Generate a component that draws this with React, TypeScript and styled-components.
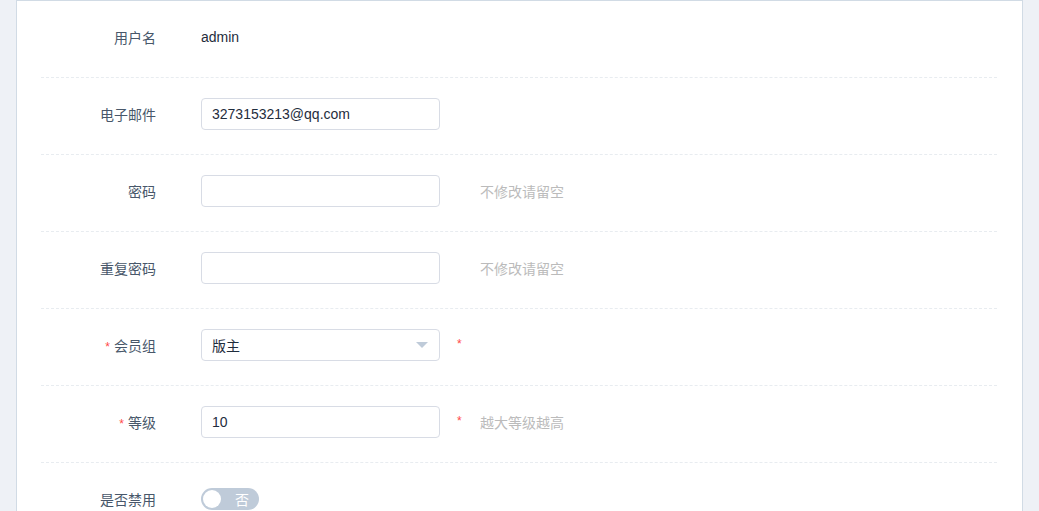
import styled, { createGlobalStyle } from "styled-components";

const GlobalStyle = createGlobalStyle`
  html, body {
    margin: 0;
    padding: 0;
    background: #eef1f6;
    font-family: "Liberation Sans", "Noto Sans CJK SC", Arial, sans-serif;
    font-size: 14px;
    color: #1f2d3d;
  }
`;

const Page = styled.div`
  padding: 0 16px;
  height: 511px;
  overflow: hidden;
`;

const Card = styled.div`
  background: #fff;
  border: 1px solid #d1dbe5;
  padding: 0 25px 0 24px;
  min-height: 600px;
`;

const Row = styled.div`
  display: flex;
  align-items: center;
  box-sizing: border-box;
  height: 77px;
  padding-bottom: 4px;
  border-bottom: 1px dashed #e8ecf0;
`;

const Label = styled.div`
  width: 115px;
  margin-right: 45px;
  text-align: right;
  color: #48576a;
  flex-shrink: 0;
`;

const Star = styled.span`
  color: #ff4949;
  font-size: 12px;
  margin-right: 4px;
`;

const Value = styled.div`
  color: #1f2d3d;
`;

const Input = styled.input`
  box-sizing: border-box;
  width: 239px;
  height: 32px;
  border: 1px solid #d8dce5;
  border-radius: 4px;
  padding: 0 10px;
  font: inherit;
  color: #1f2d3d;
  background: #fff;
  outline: none;
`;

const SelectBox = styled.div`
  position: relative;
  box-sizing: border-box;
  width: 239px;
  height: 32px;
  border: 1px solid #d8dce5;
  border-radius: 4px;
  padding: 0 10px;
  display: flex;
  align-items: center;
  color: #1f2d3d;
`;

const Arrow = styled.span`
  position: absolute;
  right: 11px;
  top: 12px;
  width: 0;
  height: 0;
  border-left: 6px solid transparent;
  border-right: 6px solid transparent;
  border-top: 6px solid #bfcbd9;
`;

const Required = styled.span`
  color: #ff4949;
  font-size: 12px;
  margin-left: 17px;
  align-self: flex-start;
  margin-top: 28px;
  width: 6px;
`;

const Hint = styled.span<{ $offset?: number }>`
  color: #bbbbbb;
  margin-left: ${(p) => p.$offset ?? 40}px;
`;

const Switch = styled.div`
  position: relative;
  width: 58px;
  height: 22px;
  border-radius: 11px;
  background: #bfcbd9;
  color: #fff;
  display: flex;
  align-items: center;
  justify-content: flex-end;
  padding-right: 10px;
  box-sizing: border-box;
`;

const Knob = styled.span`
  position: absolute;
  left: 2px;
  top: 2px;
  width: 18px;
  height: 18px;
  border-radius: 50%;
  background: #fff;
`;

const App = () => {
  return (
    <Page>
      <GlobalStyle />
      <Card>
        <Row>
          <Label>用户名</Label>
          <Value>admin</Value>
        </Row>
        <Row>
          <Label>电子邮件</Label>
          <Input defaultValue="3273153213@qq.com" />
        </Row>
        <Row>
          <Label>密码</Label>
          <Input type="password" />
          <Hint>不修改请留空</Hint>
        </Row>
        <Row>
          <Label>重复密码</Label>
          <Input type="password" />
          <Hint>不修改请留空</Hint>
        </Row>
        <Row>
          <Label>
            <Star>*</Star>会员组
          </Label>
          <SelectBox>
            版主
            <Arrow />
          </SelectBox>
          <Required>*</Required>
        </Row>
        <Row>
          <Label>
            <Star>*</Star>等级
          </Label>
          <Input defaultValue="10" />
          <Required>*</Required>
          <Hint $offset={17}>越大等级越高</Hint>
        </Row>
        <Row>
          <Label>是否禁用</Label>
          <Switch>
            <Knob />
            否
          </Switch>
        </Row>
      </Card>
    </Page>
  );
};

export default App;
